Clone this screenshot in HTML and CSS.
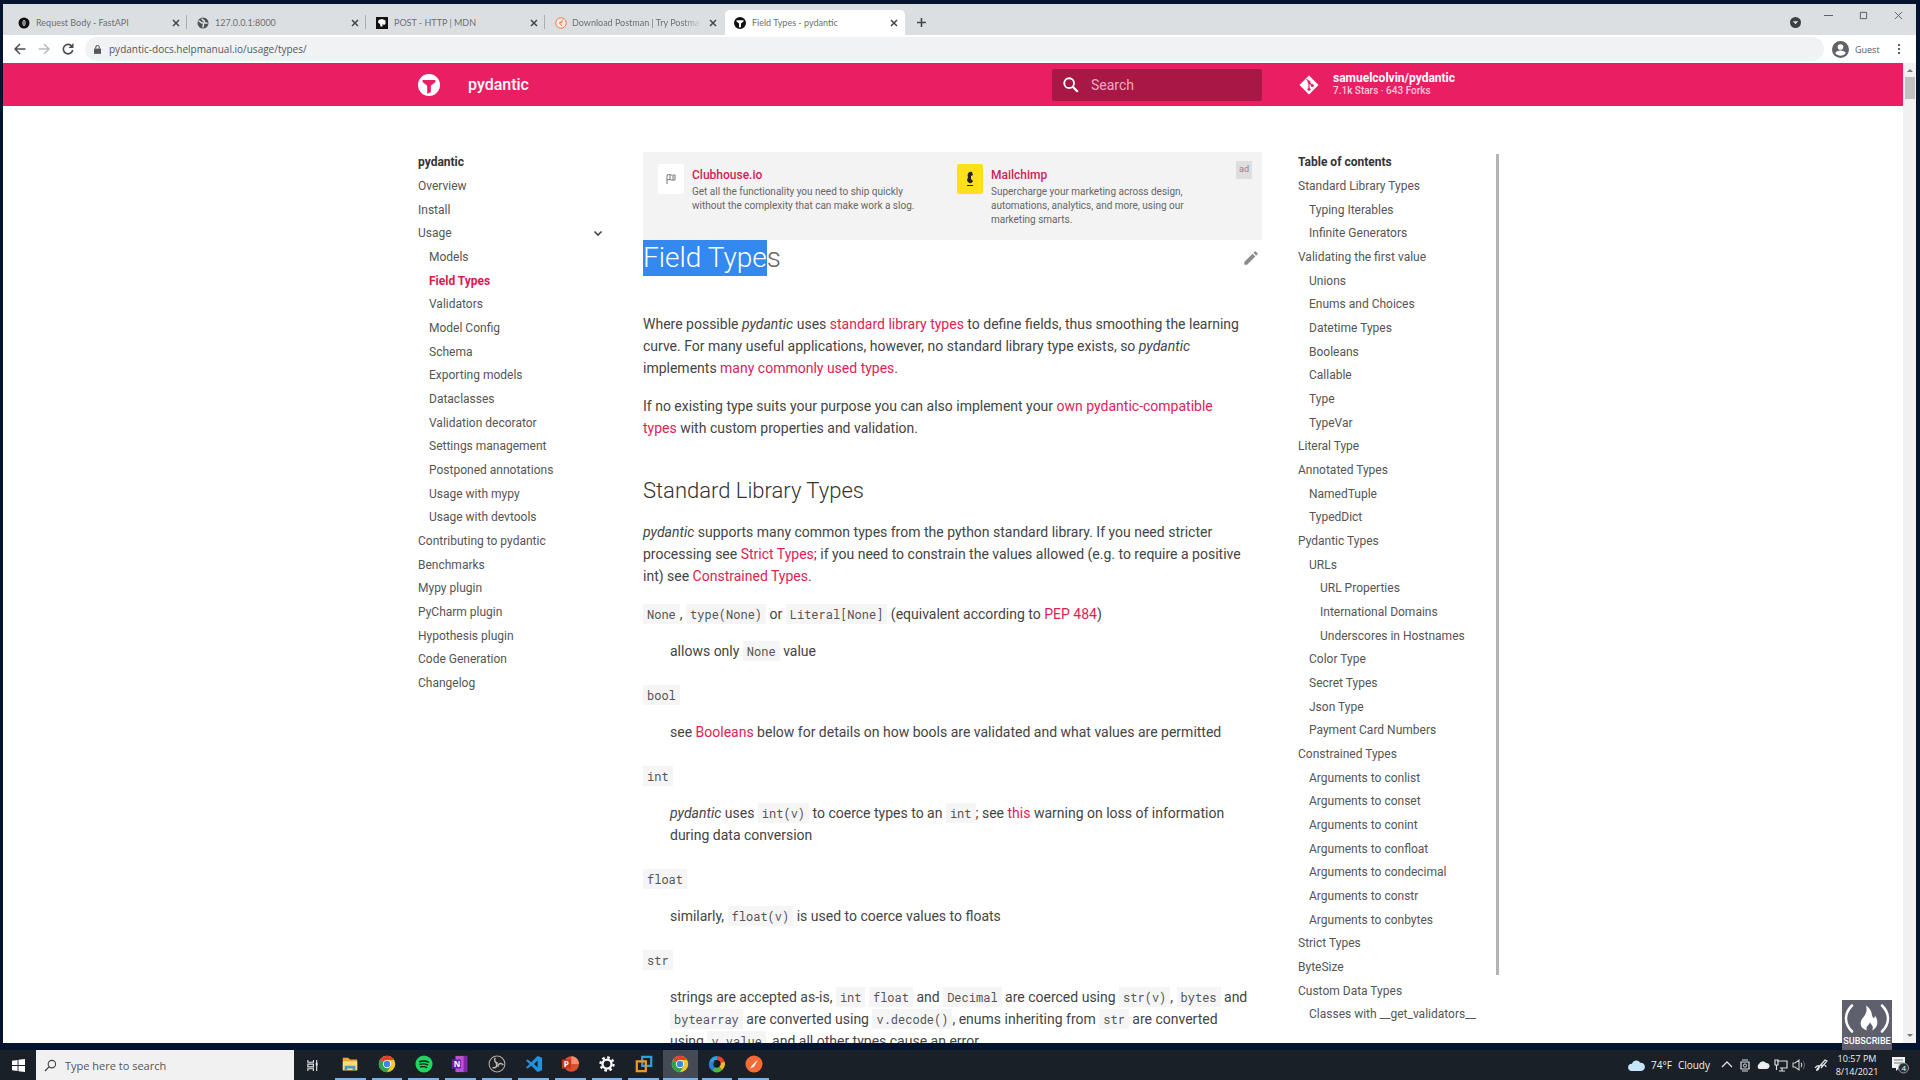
FILE: index.html
```html
<!DOCTYPE html>
<html lang="en">
<head>
<meta charset="utf-8">
<title>Field Types - pydantic</title>
<link rel="stylesheet" href="styles.css">
</head>
<body>
<svg class="defs" aria-hidden="true">
  <symbol id="close" viewBox="0 0 10 10"><path d="M2 2l6 6M8 2l-6 6" stroke="currentColor" stroke-width="1.5" fill="none"/></symbol>
  <symbol id="chrome" viewBox="0 0 24 24"><circle cx="12" cy="12" r="11" fill="#f7c829"/><path d="M12 12L2.5 6.5A11 11 0 0 1 21.5 6.5H12z" fill="#e2402f"/><path d="M12 12L2.5 6.5A11 11 0 0 0 12 23l5-8.500z" fill="#2fa34c"/><circle cx="12" cy="12" r="5.500" fill="#fff"/><circle cx="12" cy="12" r="4.300" fill="#4285e8"/></symbol>
  <symbol id="pyd" viewBox="0 0 24 24"><path fill="currentColor" fill-rule="evenodd" d="M12 0a12 12 0 1 0 0 24 12 12 0 0 0 0-24zM5 6.500h14v2.300l-5 4V20l-4 1.500v-8.700l-5-4z"/></symbol>
</svg>
<div class="desktop">
  <div class="window">
    <header class="tabstrip">
      <div class="tab"><svg class="fav" viewBox="0 0 24 24"><circle cx="12" cy="12" r="11" fill="#111"/><ellipse cx="12" cy="12" rx="3" ry="6" fill="#fff"/><path d="M12 7v10" stroke="#111" stroke-width="2"/></svg><span class="tab-title">Request Body - FastAPI</span><button class="x" aria-label="Close tab"><svg><use href="#close"/></svg></button></div>
      <div class="tab"><svg class="fav" viewBox="0 0 24 24"><circle cx="12" cy="12" r="11" fill="#4d5156"/><path d="M3 8c4 0 4 4 8 4s1 5 1 9M10 3c0 4 5 3 5 7s4 1 6 3" stroke="#dee1e6" stroke-width="3" fill="none"/></svg><span class="tab-title">127.0.0.1:8000</span><button class="x" aria-label="Close tab"><svg><use href="#close"/></svg></button></div>
      <div class="tab"><svg class="fav" viewBox="0 0 24 24"><path d="M0 0h24v24H0z" fill="#111"/><path d="M5 6l7-2 7 3v7l-3 2-3-2v5H9l-1-5-4-3z" fill="#fff"/></svg><span class="tab-title">POST - HTTP | MDN</span><button class="x" aria-label="Close tab"><svg><use href="#close"/></svg></button></div>
      <div class="tab last"><svg class="fav" viewBox="0 0 24 24"><circle cx="12" cy="12" r="10.500" fill="#fbe9e2" stroke="#ee7f52" stroke-width="2"/><path d="M16 5l-7 7 5 6M9 12l6-2" stroke="#ee7f52" stroke-width="2" fill="none"/></svg><span class="tab-title fade">Download Postman | Try Postma</span><button class="x" aria-label="Close tab"><svg><use href="#close"/></svg></button></div>
      <div class="tab active"><svg class="fav"><use href="#pyd"/></svg><span class="tab-title">Field Types - pydantic</span><button class="x" aria-label="Close tab"><svg><use href="#close"/></svg></button></div>
      <button class="newtab" aria-label="New tab"><svg viewBox="0 0 10 10"><path d="M5 0v10M0 5h10" stroke="#444" stroke-width="1.800"/></svg></button>
      <div class="caption">
        <svg class="drop" viewBox="0 0 12 12"><circle cx="6" cy="6" r="6" fill="#3c4043"/><path d="M3 4.500h6L6 8z" fill="#dee1e6"/></svg>
        <button aria-label="Minimize"><svg viewBox="0 0 10 10"><path d="M0 5h10" stroke="#555"/></svg></button>
        <button aria-label="Maximize"><svg viewBox="0 0 10 10"><path d="M1.500 1.500h7v7h-7z" stroke="#555" fill="none"/></svg></button>
        <button aria-label="Close"><svg viewBox="0 0 10 10"><path d="M1 1l8 8M9 1l-8 8" stroke="#555"/></svg></button>
      </div>
    </header>
    <div class="toolbar">
      <button aria-label="Back"><svg viewBox="0 0 12 12"><path d="M11.500 6H1.500M6 1L1 6l5 5" stroke="#4a4d51" stroke-width="1.500" fill="none"/></svg></button>
      <button aria-label="Forward"><svg viewBox="0 0 12 12"><path d="M.5 6h10M6 1l5 5-5 5" stroke="#b9bbbe" stroke-width="1.500" fill="none"/></svg></button>
      <button aria-label="Reload"><svg viewBox="0 0 12 12"><path d="M10 3.500A4.700 4.700 0 1 0 10.700 7" stroke="#4a4d51" stroke-width="1.600" fill="none"/><path d="M11.500 0v5h-5z" fill="#4a4d51"/></svg></button>
      <div class="omnibox"><svg viewBox="0 0 8 10"><path d="M0 4h8v6H0z" fill="#55585c"/><path d="M2 4V2.500a2 2 0 0 1 4 0V4" fill="none" stroke="#55585c" stroke-width="1.200"/></svg><input aria-label="Address" value="pydantic-docs.helpmanual.io/usage/types/"></div>
      <button class="guest"><svg viewBox="0 0 24 24"><circle cx="12" cy="12" r="12" fill="#5f6368"/><circle cx="12" cy="8.500" r="4" fill="#fff"/><path d="M4.500 17c2-5 13-5 15 0-4 5-11 5-15 0z" fill="#fff"/></svg>Guest</button>
      <button aria-label="Menu"><svg viewBox="0 0 12 12"><path d="M5 1h2v2H5zM5 5h2v2H5zM5 9h2v2H5z" fill="#5f6368"/></svg></button>
    </div>
    <div class="viewport">
      <div class="page">
        <header class="site-header">
          <div class="header-inner">
            <a class="logo" href="#" aria-label="Home"><svg><use href="#pyd"/></svg></a>
            <span class="site-title">pydantic</span>
            <label class="search"><svg viewBox="0 0 24 24"><circle cx="9.500" cy="9.500" r="6.500" fill="none" stroke="currentColor" stroke-width="2.500"/><path d="M14 14l7 7" stroke="currentColor" stroke-width="3"/></svg><input type="text" placeholder="Search" aria-label="Search"></label>
            <a class="repo" href="#"><svg viewBox="0 0 24 24"><path d="M12 1l11 11-11 11L1 12z" fill="#fff" stroke="#fff" stroke-linejoin="round"/><path d="M9 5l3 3v8M12 9l4 3.500" stroke="#e91e63" stroke-width="1.500" fill="none"/><circle cx="12" cy="8.500" r="1.800" fill="#e91e63"/><circle cx="12" cy="17" r="1.800" fill="#e91e63"/><circle cx="16" cy="12.500" r="1.800" fill="#e91e63"/></svg><span class="repo-text"><b>samuelcolvin/pydantic</b><small>7.1k Stars · 643 Forks</small></span></a>
          </div>
        </header>
        <div class="columns">
          <nav class="side" aria-label="Navigation">
            <ul>
              <li class="title">pydantic</li>
              <li><a href="#">Overview</a></li>
              <li><a href="#">Install</a></li>
              <li class="open"><a href="#">Usage</a><svg viewBox="0 0 10 10"><path d="M1.500 3.500L5 7l3.500-3.500" fill="none" stroke="#444" stroke-width="1.600"/></svg></li>
              <li class="l2"><a href="#">Models</a></li>
              <li class="l2 current"><a href="#">Field Types</a></li>
              <li class="l2"><a href="#">Validators</a></li>
              <li class="l2"><a href="#">Model Config</a></li>
              <li class="l2"><a href="#">Schema</a></li>
              <li class="l2"><a href="#">Exporting models</a></li>
              <li class="l2"><a href="#">Dataclasses</a></li>
              <li class="l2"><a href="#">Validation decorator</a></li>
              <li class="l2"><a href="#">Settings management</a></li>
              <li class="l2"><a href="#">Postponed annotations</a></li>
              <li class="l2"><a href="#">Usage with mypy</a></li>
              <li class="l2"><a href="#">Usage with devtools</a></li>
              <li><a href="#">Contributing to pydantic</a></li>
              <li><a href="#">Benchmarks</a></li>
              <li><a href="#">Mypy plugin</a></li>
              <li><a href="#">PyCharm plugin</a></li>
              <li><a href="#">Hypothesis plugin</a></li>
              <li><a href="#">Code Generation</a></li>
              <li><a href="#">Changelog</a></li>
            </ul>
          </nav>
          <main>
            <aside class="ad">
              <div class="sponsor"><span class="sponsor-logo"><svg viewBox="0 0 12 12"><path d="M2 11V2c3-1.500 4 1 8 0v5c-4 1-5-1.500-8 0M5 2v5M8 3v4" fill="none" stroke="#777"/></svg></span><div><a href="#">Clubhouse.io</a><div class="sponsor-text">Get all the functionality you need to ship quickly without the complexity that can make work a slog.</div></div></div>
              <div class="sponsor"><span class="sponsor-logo yellow"><svg viewBox="0 0 12 16"><path d="M8 1C4 0 3 4 4 6L3 9c1 4 5 4 6 1L7 8V5l2-1z" fill="#222"/><path d="M3 14.500h6" stroke="#222"/></svg></span><div><a href="#">Mailchimp</a><div class="sponsor-text">Supercharge your marketing across design, automations, analytics, and more, using our marketing smarts.</div></div></div>
              <span class="ad-badge">ad</span>
            </aside>
            <div class="heading"><h1><mark>Field Type</mark>s</h1><a href="#" aria-label="Edit this page"><svg viewBox="0 0 24 24"><path d="M20.700 7c.4-.4.4-1 0-1.400l-2.300-2.300c-.4-.4-1-.4-1.400 0l-1.800 1.800L19 8.900M3 17.200V21h3.800L17.800 9.900l-3.700-3.700z" fill="#8c8c8c"/></svg></a></div>
            <p>Where possible <em>pydantic</em> uses <a href="#">standard library types</a> to define fields, thus smoothing the learning curve. For many useful applications, however, no standard library type exists, so <em>pydantic</em> implements <a href="#">many commonly used types</a>.</p>
            <p>If no existing type suits your purpose you can also implement your <a href="#">own pydantic-compatible types</a> with custom properties and validation.</p>
            <h2>Standard Library Types</h2>
            <p><em>pydantic</em> supports many common types from the python standard library. If you need stricter processing see <a href="#">Strict Types</a>; if you need to constrain the values allowed (e.g. to require a positive int) see <a href="#">Constrained Types</a>.</p>
            <dl>
              <dt><code>None</code>, <code>type(None)</code> or <code>Literal[None]</code> (equivalent according to <a href="#">PEP 484</a>)</dt>
              <dd>allows only <code>None</code> value</dd>
              <dt><code>bool</code></dt>
              <dd>see <a href="#">Booleans</a> below for details on how bools are validated and what values are permitted</dd>
              <dt><code>int</code></dt>
              <dd><em>pydantic</em> uses <code>int(v)</code> to coerce types to an <code>int</code>; see <a href="#">this</a> warning on loss of information during data conversion</dd>
              <dt><code>float</code></dt>
              <dd>similarly, <code>float(v)</code> is used to coerce values to floats</dd>
              <dt><code>str</code></dt>
              <dd>strings are accepted as-is, <code>int</code> <code>float</code> and <code>Decimal</code> are coerced using <code>str(v)</code>, <code>bytes</code> and <code>bytearray</code> are converted using <code>v.decode()</code>, enums inheriting from <code>str</code> are converted using <code>v.value</code>, and all other types cause an error</dd>
            </dl>
          </main>
          <nav class="side toc" aria-label="Table of contents">
            <ul>
              <li class="title">Table of contents</li>
              <li><a href="#">Standard Library Types</a></li>
              <li class="l2"><a href="#">Typing Iterables</a></li>
              <li class="l2"><a href="#">Infinite Generators</a></li>
              <li><a href="#">Validating the first value</a></li>
              <li class="l2"><a href="#">Unions</a></li>
              <li class="l2"><a href="#">Enums and Choices</a></li>
              <li class="l2"><a href="#">Datetime Types</a></li>
              <li class="l2"><a href="#">Booleans</a></li>
              <li class="l2"><a href="#">Callable</a></li>
              <li class="l2"><a href="#">Type</a></li>
              <li class="l2"><a href="#">TypeVar</a></li>
              <li><a href="#">Literal Type</a></li>
              <li><a href="#">Annotated Types</a></li>
              <li class="l2"><a href="#">NamedTuple</a></li>
              <li class="l2"><a href="#">TypedDict</a></li>
              <li><a href="#">Pydantic Types</a></li>
              <li class="l2"><a href="#">URLs</a></li>
              <li class="l3"><a href="#">URL Properties</a></li>
              <li class="l3"><a href="#">International Domains</a></li>
              <li class="l3"><a href="#">Underscores in Hostnames</a></li>
              <li class="l2"><a href="#">Color Type</a></li>
              <li class="l2"><a href="#">Secret Types</a></li>
              <li class="l2"><a href="#">Json Type</a></li>
              <li class="l2"><a href="#">Payment Card Numbers</a></li>
              <li><a href="#">Constrained Types</a></li>
              <li class="l2"><a href="#">Arguments to conlist</a></li>
              <li class="l2"><a href="#">Arguments to conset</a></li>
              <li class="l2"><a href="#">Arguments to conint</a></li>
              <li class="l2"><a href="#">Arguments to confloat</a></li>
              <li class="l2"><a href="#">Arguments to condecimal</a></li>
              <li class="l2"><a href="#">Arguments to constr</a></li>
              <li class="l2"><a href="#">Arguments to conbytes</a></li>
              <li><a href="#">Strict Types</a></li>
              <li><a href="#">ByteSize</a></li>
              <li><a href="#">Custom Data Types</a></li>
              <li class="l2"><a href="#">Classes with __get_validators__</a></li>
            </ul>
            <div class="toc-bar"></div>
          </nav>
        </div>
      </div>
      <div class="scrollbar"><svg viewBox="0 0 8 6"><path d="M1 5l3-3 3 3z" fill="#777"/></svg><i></i><svg viewBox="0 0 8 6"><path d="M1 1l3 3 3-3z" fill="#777"/></svg></div>
    </div>
  </div>
  <footer class="taskbar">
    <button class="start" aria-label="Start"><svg viewBox="0 0 14 14"><path d="M0 2l6-1v5.500H0zM7 .8L14 0v6.500H7zM0 7.500h6V13l-6-1zM7 7.500h7V14l-7-.8z" fill="#fff"/></svg></button>
    <label class="tb-search"><svg viewBox="0 0 14 14"><circle cx="8.500" cy="5.500" r="4" fill="none" stroke="#444" stroke-width="1.200"/><path d="M5.500 8.500L1 13" stroke="#444" stroke-width="1.400"/></svg><input type="text" placeholder="Type here to search" aria-label="Type here to search"></label>
    <button class="taskview" aria-label="Task view"><svg viewBox="0 0 14 14"><path d="M2 1v2.500h6V1M2 13v-2.500h6V13M2 5.500h6v3H2zM11.500 1v12" fill="none" stroke="#e4e4e4" stroke-width="1.200"/><path d="M10.500 4h2v3h-2z" fill="#e4e4e4"/></svg></button>
    <div class="apps">
      <button aria-label="File Explorer"><svg viewBox="0 0 20 20"><path d="M2 3h6l2 2h8v12H2z" fill="#e9a931"/><path d="M2 7h16v10H2z" fill="#fbdc7a"/><path d="M4 12h12v5h-3v-2H7v2H4z" fill="#4a9cc0"/></svg></button>
      <button aria-label="Chrome"><svg><use href="#chrome"/></svg></button>
      <button aria-label="Spotify"><svg viewBox="0 0 20 20"><circle cx="10" cy="10" r="9.500" fill="#1ed760"/><path d="M4.500 7.500c4-1.300 8-1 11 .7M5 10.500c3.500-1 7-.7 9.500.7M5.500 13.300c3-.8 5.500-.5 8 .6" stroke="#152019" stroke-width="1.500" fill="none"/></svg></button>
      <button aria-label="OneNote"><svg viewBox="0 0 20 20"><path d="M5 1h13v18H5z" fill="#b455d8"/><path d="M14 1h4v18h-4z" fill="#8126ad"/><path d="M1 5h10v10H1z" fill="#7719aa"/><text x="3" y="13" font-size="9" font-weight="700" fill="#fff">N</text></svg></button>
      <button aria-label="OBS"><svg viewBox="0 0 20 20"><circle cx="10" cy="10" r="8.800" fill="#222" stroke="#aaa" stroke-width="1.200"/><path d="M8 3c-2 4 1 6 3 6M17 11c-3-3-6-1-6 2M5 14c4 1 6-2 4-5" stroke="#bbb" stroke-width="1.600" fill="none"/></svg></button>
      <button aria-label="VS Code"><svg viewBox="0 0 20 20"><path d="M14 1l5 2v14l-5 2-7-7-4 3-2-1 4-4-4-4 2-1 4 3zM14 6l-4 4 4 4z" fill="#2590dc" fill-rule="evenodd"/></svg></button>
      <button aria-label="PowerPoint"><svg viewBox="0 0 20 20"><circle cx="11.500" cy="10" r="8.500" fill="#d8512e"/><path d="M11.500 1.500A8.500 8.500 0 0 1 20 10h-8.500z" fill="#f58f6f"/><path d="M1 5h10v10H1z" fill="#c13b1b"/><text x="3" y="13" font-size="9" font-weight="700" fill="#fff">P</text></svg></button>
      <button aria-label="Settings"><svg viewBox="0 0 20 20"><circle cx="10" cy="10" r="5" fill="none" stroke="#fff" stroke-width="2.500"/><circle cx="10" cy="10" r="7.300" fill="none" stroke="#fff" stroke-width="2.500" stroke-dasharray="2.900 2.830"/></svg></button>
      <button aria-label="VMware"><svg viewBox="0 0 20 20"><path d="M8 2h10v10H8z" fill="none" stroke="#2e9fd8" stroke-width="2.500"/><path d="M2 7h10v11H2z" fill="none" stroke="#ee9a22" stroke-width="2.500"/></svg></button>
      <button class="on" aria-label="Chrome window"><svg><use href="#chrome"/></svg></button>
      <button aria-label="Color picker"><svg viewBox="0 0 20 20"><g fill="none" stroke-width="5"><path d="M10 3.500A6.500 6.500 0 0 1 16 8" stroke="#e83f30"/><path d="M16 8a6.500 6.500 0 0 1-2 7" stroke="#f8ba20"/><path d="M14 15a6.500 6.500 0 0 1-8 .500" stroke="#4cb848"/><path d="M6 15.500A6.500 6.500 0 0 1 4 8" stroke="#2c7fdd"/><path d="M4 8a6.500 6.500 0 0 1 6-4.500" stroke="#2c9fdd"/></g><path d="M6 7c3-3 8-1 8 3-1 4-6 5-8 2 3 1 5-1 4-3-1-1-3-1-4-2z" fill="#101a28"/></svg></button>
      <button aria-label="Postman"><svg viewBox="0 0 20 20"><circle cx="10" cy="10" r="9.500" fill="#f76935"/><path d="M14.500 5L8 11.500 5.500 15 10 13z" fill="#fff"/></svg></button>
    </div>
    <div class="tray">
      <svg class="weather" viewBox="0 0 18 14"><path d="M4 13a4 4 0 0 1 0-8 5 5 0 0 1 9-1 4.500 4.500 0 0 1 1 9z" fill="#c6e7fb"/></svg>
      <span class="wx">74°F</span><span class="wx">Cloudy</span>
      <div class="tray-icons">
        <svg viewBox="0 0 14 14"><path d="M2 9l5-5 5 5" fill="none" stroke="#ddd" stroke-width="1.300"/></svg>
        <svg viewBox="0 0 14 14"><path d="M3 4h8v7H3zM4 2h6M4 13h6" fill="none" stroke="#ddd" stroke-width="1.200"/><circle cx="7" cy="7.500" r="1.600" fill="none" stroke="#ddd"/></svg>
        <svg viewBox="0 0 14 14"><path d="M3 11a3 3 0 0 1 0-5 4 4 0 0 1 7-1 3 3 0 0 1 1 6z" fill="#eee"/></svg>
        <svg viewBox="0 0 14 14"><path d="M3 3h10v7H6M8 10v3M5 13h6M1 2v5h3V2zM2.500 7v5" fill="none" stroke="#ddd" stroke-width="1.200"/></svg>
        <svg viewBox="0 0 14 14"><path d="M1 5h2l4-3v10L3 9H1zM9 5c1 1 1 3 0 4" fill="none" stroke="#ccc" stroke-width="1.100"/><path d="M11 3c2 2 2 6 0 8" fill="none" stroke="#666"/></svg>
      </div>
      <svg class="pen" viewBox="0 0 14 14"><path d="M1 10c2-3 5-3 4 0s-4 3-1 0l7-8 2 1-6 7M7 8c3-2 5-1 5 1" fill="none" stroke="#ddd" stroke-width="1.300"/></svg>
      <div class="clock"><span>10:57 PM</span><span>8/14/2021</span></div>
      <button class="notes" aria-label="4 notifications"><svg viewBox="0 0 18 18"><path d="M1 1h13v11H8l-3 3v-3H1z" fill="#f2f2f2"/><path d="M3 4h9M3 7h9" stroke="#777"/><circle cx="12.500" cy="12" r="5" fill="#2a3038" stroke="#999"/><text x="10.500" y="15" font-size="8" fill="#fff">4</text></svg></button>
    </div>
  </footer>
  <a class="subscribe" href="#"><svg viewBox="0 0 46 30"><path d="M8 2C0 10 0 20 8 28M38 2c8 8 8 18 0 26" fill="none" stroke="#fff" stroke-width="2.500" stroke-linecap="round"/><path d="M22 2c7 5 5 9 7 12 1 1 2 0 2-2 4 6 3 12-3 15 2-4 0-5-2-8-1 3-5 4-3 8-9-3-7-10-3-14 3-4 3-7 2-11z" fill="#fff"/></svg>SUBSCRIBE</a>
</div>
</body>
</html>
```
FILE: styles.css
```css
* { box-sizing: border-box; }
body { margin: 0; font-family: Roboto, "Liberation Sans", sans-serif; color: #444; }
a { color: inherit; text-decoration: none; }
button { border: 0; padding: 0; background: none; font: inherit; color: inherit; display: flex; align-items: center; justify-content: center; }
input { border: 0; padding: 0; background: none; font: inherit; color: inherit; min-width: 0; flex: 1; outline: 0; }
ul, dl, dd, p, h1, h2 { margin: 0; padding: 0; }
svg { display: block; flex: none; }
.defs { position: absolute; width: 0; height: 0; }

/* desktop shell */
.desktop { height: 100vh; display: flex; flex-direction: column; background: #04142f; position: relative; }
.window { flex: 1; min-height: 0; margin: 4px 4px 7px 3px; display: flex; flex-direction: column; background: #fff; }

/* browser chrome */
.tabstrip, .toolbar, .taskbar { font-family: "Open Sans", "Noto Sans", sans-serif; flex: none; }
.tabstrip { height: 31px; display: flex; align-items: flex-end; padding-left: 6px; background: #dcdfe2; }
.tab { width: 179px; height: 25px; display: flex; align-items: center; gap: 6px; padding: 0 6px 0 9px; border-right: 1px solid #dcdfe2; font-family: Lato, "Open Sans", sans-serif; font-size: 9px; color: #6c6f73; position: relative; }
.tab:not(.active):not(.last)::after { content: ""; position: absolute; right: 0; top: 5px; height: 14px; border-right: 1px solid #aaadb1; }
.tab.active { width: 181px; background: #fff; border-radius: 5px 5px 0 0; }
.tab.last { gap: 5px; }
.fav { width: 12px; height: 12px; color: #111; }
.tab-title { flex: 1; white-space: nowrap; }
.fade { -webkit-mask-image: linear-gradient(90deg, #000 85%, transparent); mask-image: linear-gradient(90deg, #000 85%, transparent); }
.x, .x svg { width: 10px; height: 10px; color: #444; }
.newtab { width: 30px; height: 25px; }
.newtab svg { width: 9px; height: 9px; }
.caption { margin-left: auto; height: 31px; display: flex; }
.caption .drop { width: 11px; height: 11px; margin: 13px 10px 0 0; }
.caption button { width: 35px; height: 22px; }
.caption button svg { width: 9px; height: 9px; }
.toolbar { height: 28px; display: flex; align-items: center; padding: 0 5px; font-size: 10px; color: #55585c; }
.toolbar > button { width: 24px; height: 24px; }
.toolbar button svg { width: 12px; height: 12px; }
.omnibox { flex: 1; height: 24px; margin: 0 8px 0 5px; padding-left: 9px; display: flex; align-items: center; gap: 8px; border-radius: 12px; background: #f0f2f4; }
.omnibox svg { width: 7px; height: 9px; }
.toolbar > .guest { width: 55px; gap: 6px; justify-content: flex-start; font-size: 9px; }
.toolbar > .guest svg { width: 17px; height: 17px; }

/* page */
.viewport { flex: 1; min-height: 0; display: flex; }
.page { flex: 1; min-width: 0; overflow: hidden; }
.scrollbar { width: 13px; flex: none; display: flex; flex-direction: column; align-items: center; padding: 4px 1px; background: #f1f1f1; }
.scrollbar svg { width: 8px; height: 6px; }
.scrollbar i { width: 10px; height: 22px; margin: 4px 0 auto; background: #c1c1c1; }
.site-header { background: #e91e63; color: #fff; }
.header-inner, .columns { max-width: 1092px; margin: 0 auto; padding-left: 11px; display: grid; grid-template-columns: 189px minmax(0, 1fr) 201px; column-gap: 36px; }
.header-inner { height: 43px; display: flex; align-items: center; column-gap: 0; }
.logo svg { width: 22px; height: 22px; }
.site-title { flex: 1; padding-left: 28px; font-size: 16px; font-weight: 500; }
.search { width: 210px; height: 32px; display: flex; align-items: center; gap: 11px; padding-left: 10px; border-radius: 2px; background: #a91746; color: #f6bcd0; font-size: 14px; }
.search svg { width: 18px; height: 18px; color: #fff; }
.search input::placeholder { color: #f0aac2; opacity: 1; }
.repo { width: 237px; padding-left: 37px; display: flex; align-items: center; gap: 14px; }
.repo svg { width: 20px; height: 20px; }
.repo-text { display: flex; flex-direction: column; }
.repo-text b { font-size: 12px; line-height: 13px; }
.repo-text small { font-size: 10px; line-height: 12px; font-weight: 500; color: #fbc9d9; }

.columns { padding-top: 46px; }
.side { font-size: 12px; line-height: 16px; padding-top: 2px; color: #555; }
.side ul { list-style: none; }
.side li { margin-bottom: 8px; white-space: nowrap; }
.side li:nth-child(3n) { margin-bottom: 7px; }
.side .title { font-weight: 700; color: #333; }
.side .l2 { padding-left: 11px; }
.side .l3 { padding-left: 22px; }
.side .current { font-weight: 700; color: #d81b50; }
.open { display: flex; align-items: center; justify-content: space-between; padding-right: 4px; }
.open svg { width: 10px; height: 10px; }
.toc { display: flex; justify-content: space-between; align-self: start; }
.toc ul { width: 190px; }
.toc-bar { width: 3px; margin-bottom: 55px; background: #b4b4b4; }

.ad { height: 88px; padding: 12px 10px 0 15px; display: flex; background: #f3f3f3; }
.sponsor { width: 299px; padding-right: 32px; flex: none; display: flex; gap: 8px; color: #666; font-size: 10px; line-height: 14px; }
.sponsor:nth-child(2) { width: 270px; }
.sponsor a { display: block; font-size: 12px; line-height: 14px; font-weight: 500; color: #cf1f56; padding-top: 4px; }
.sponsor-text { padding-top: 3px; }
.sponsor-logo { width: 26px; height: 30px; flex: none; display: flex; align-items: center; justify-content: center; border-radius: 2px; background: #fff; }
.sponsor-logo svg { width: 12px; height: 16px; }
.sponsor-logo.yellow { background: #ffe01b; }
.ad-badge { margin: -3px 0 0 auto; height: 18px; padding: 0 3px; font-size: 9px; line-height: 17px; background: #dedede; color: #888; }
.heading { height: 73px; display: flex; justify-content: space-between; }
h1 { font-size: 28px; line-height: 36px; font-weight: 300; color: #666; }
mark { display: inline-block; background: #3389f0; color: #fff; }
.heading svg { width: 18px; height: 18px; margin: 9px 2px 0; }
h2 { font-size: 22px; line-height: 34px; font-weight: 300; margin: 35px 0 13px; color: #333; }
main { font-size: 14px; line-height: 22px; }
main > p { padding-right: 16px; }
main > p + p, dl { margin-top: 16px; }
main p a, dl a { color: #dc2358; }
dt { margin-top: 22px; }
dt:first-child { margin-top: 0; }
dd { margin: 15px 12px 0 27px; }
code { font-family: "Roboto Mono", "Liberation Mono", monospace; font-size: 12px; padding: 2px 4px; background: #f5f5f5; color: #555; }

/* taskbar */
.taskbar { height: 30px; display: flex; background: #1a2028; color: #eee; font-size: 10px; }
.start { width: 36px; }
.start svg { width: 13px; height: 13px; }
.tb-search { width: 258px; display: flex; align-items: center; gap: 8px; padding-left: 8px; background: #f1f1f1; color: #555; font-size: 11px; }
.tb-search svg, .taskview svg { width: 13px; height: 13px; }
.tb-search input::placeholder { color: #555; opacity: 1; }
.taskview { width: 36px; margin-right: 2px; }
.apps { width: 440px; display: grid; grid-template-columns: repeat(12, 1fr); }
.apps button { border-bottom: 2px solid #78b4ea; margin: 0 3px; }
.apps .on { margin: 0 1px; background: #454b54; }
.apps svg { width: 18px; height: 18px; }
.tray { margin-left: auto; display: flex; align-items: center; }
.weather { width: 17px; height: 13px; margin-right: 6px; }
.wx { margin-right: 6px; font-size: 10px; }
.tray-icons { display: flex; gap: 4px; margin-left: 4px; }
.tray-icons svg, .pen { width: 14px; height: 14px; }
.pen { margin-left: 8px; }
.clock { width: 58px; display: flex; flex-direction: column; text-align: center; font-size: 9px; line-height: 13px; }
.notes { width: 28px; margin-right: 6px; }
.notes svg { width: 18px; height: 18px; }
.subscribe { position: absolute; right: 28px; bottom: 30px; width: 50px; height: 50px; padding-top: 3px; display: flex; flex-direction: column; align-items: center; background: #5f5f6e; color: #fff; font-size: 9px; line-height: 14px; font-weight: 500; }
.subscribe svg { width: 46px; height: 31px; }
```
